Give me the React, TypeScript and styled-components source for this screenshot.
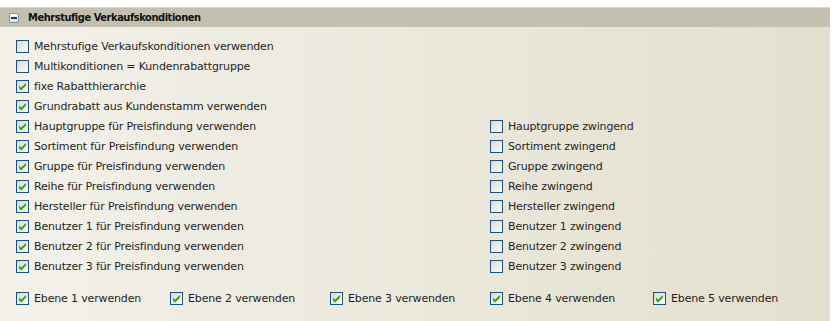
import styled, {createGlobalStyle} from "styled-components"

const Global = createGlobalStyle`
    body {
        margin: 0;
        background: #ffffff;
        font-family: Tahoma, "DejaVu Sans", Verdana, sans-serif;
    }
`;

const Panel = styled.div`
    width: 830px;
    height: 314px;
    margin-top: 7px;
    background: linear-gradient(to right, #f3f1e9, #e3e0cf);
    display: flex;
    flex-direction: column;
`;

const Header = styled.div`
    height: 20px;
    background: #c3c0af;
    border-top: 1px solid #d6d4c6;
    box-sizing: border-box;
    display: flex;
    align-items: center;
    padding-left: 9px;
    gap: 9px;
    font: bold 11px "DejaVu Sans Condensed", "DejaVu Sans", sans-serif;
    color: #111;
    letter-spacing: -0.45px;
`;

const Toggle = styled.span`
    width: 10px;
    height: 10px;
    box-sizing: border-box;
    border: 1px solid #7d93b5;
    border-radius: 1px;
    background: linear-gradient(#ffffff, #dfe4ec);
    display: flex;
    align-items: center;
    justify-content: center;
    &::after {
        content: "";
        width: 6px;
        height: 2px;
        background: #2a3a55;
    }
`;

const Body = styled.div`
    padding: 9px 0 0 16px;
    display: flex;
    flex-direction: column;
`;

const Row = styled.div`
    display: grid;
    grid-template-columns: 474px 300px;
    height: 20px;
    align-items: center;
`;

const Bottom = styled.div`
    margin-top: 12px;
    display: grid;
    grid-template-columns: 154px 160px 160px 163px 160px;
    height: 20px;
    align-items: center;
`;

const Item = styled.label`
    display: flex;
    align-items: center;
    gap: 5px;
    font: 11px "DejaVu Sans", sans-serif;
    letter-spacing: -0.15px;
    color: #1f1f1f;
    white-space: nowrap;
`;

function Box(props: {checked: boolean}) {
    return (
        <svg width="13" height="13" viewBox="0 0 13 13">
            <defs>
                <linearGradient id="cbg" x1="0" y1="0" x2="1" y2="1">
                    <stop offset="0" stopColor="#d8d8d0"/>
                    <stop offset="1" stopColor="#ffffff"/>
                </linearGradient>
            </defs>
            <rect x="0.5" y="0.5" width="12" height="12" fill="url(#cbg)" stroke="#1c5180"/>
            {props.checked &&
                <path d="M3 5.6 L5 7.8 L10 2.9 L10 5.6 L5 10.4 L3 8.3 Z" fill="#21a121"/>}
        </svg>
    );
}

function Check(props: {label: string, checked: boolean}) {
    return (
        <Item>
            <Box checked={props.checked}/>
            <span>{props.label}</span>
        </Item>
    );
}

const rows: [string, boolean, string?][] = [
    ["Mehrstufige Verkaufskonditionen verwenden", false],
    ["Multikonditionen = Kundenrabattgruppe", false],
    ["fixe Rabatthierarchie", true],
    ["Grundrabatt aus Kundenstamm verwenden", true],
    ["Hauptgruppe für Preisfindung verwenden", true, "Hauptgruppe zwingend"],
    ["Sortiment für Preisfindung verwenden", true, "Sortiment zwingend"],
    ["Gruppe für Preisfindung verwenden", true, "Gruppe zwingend"],
    ["Reihe für Preisfindung verwenden", true, "Reihe zwingend"],
    ["Hersteller für Preisfindung verwenden", true, "Hersteller zwingend"],
    ["Benutzer 1 für Preisfindung verwenden", true, "Benutzer 1 zwingend"],
    ["Benutzer 2 für Preisfindung verwenden", true, "Benutzer 2 zwingend"],
    ["Benutzer 3 für Preisfindung verwenden", true, "Benutzer 3 zwingend"],
];

export default function App() {
    return (
        <>
            <Global/>
            <Panel>
                <Header>
                    <Toggle/>
                    <span>Mehrstufige Verkaufskonditionen</span>
                </Header>
                <Body>
                    {rows.map(([left, checked, right]) =>
                        <Row key={left}>
                            <Check label={left} checked={checked}/>
                            {right && <Check label={right} checked={false}/>}
                        </Row>
                    )}
                    <Bottom>
                        {[1, 2, 3, 4, 5].map(n =>
                            <Check key={n} label={`Ebene ${n} verwenden`} checked={true}/>
                        )}
                    </Bottom>
                </Body>
            </Panel>
        </>
    );
}
